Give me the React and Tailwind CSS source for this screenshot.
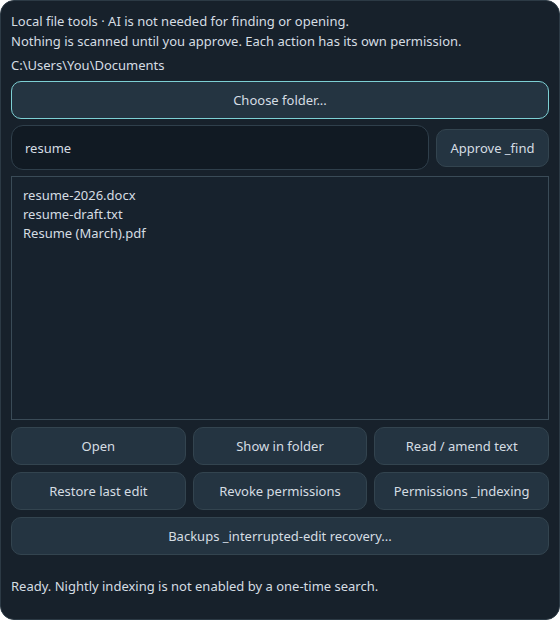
import { useState } from "react";

const files = ["resume-2026.docx", "resume-draft.txt", "Resume (March).pdf"];

const btnBase =
  "h-[38px] pt-[2px] rounded-[10px] border bg-[#243441] text-[13px] text-[#d5dde3] flex items-center justify-center";
const btn = btnBase + " border-[#33444f]";

export default function App() {
  const [query, setQuery] = useState("resume");

  return (
    <div
      className="w-[560px] h-[620px] bg-[#17212b] text-[#d5dde3] text-[13px] rounded-[14px] border border-[#2c3a45] px-[10px] pt-[10px] flex flex-col"
      style={{ fontFamily: '"Noto Sans", "Open Sans", sans-serif' }}
    >
      <div className="leading-[20px]">
        <div>Local file tools · AI is not needed for finding or opening.</div>
        <div>Nothing is scanned until you approve. Each action has its own permission.</div>
      </div>
      <div className="mt-[4px] leading-[20px]">C:\Users\You\Documents</div>

      <button className={btnBase + " mt-[6px] w-full border-[#7dd0d4]"}>Choose folder...</button>

      <div className="flex gap-[7px] mt-[6px] items-center">
        <input
          className="flex-1 h-[45px] rounded-[12px] border border-[#2f3f4b] bg-[#111a23] px-[13px] text-[13px] text-[#d5dde3] outline-none"
          value={query}
          onChange={(e) => setQuery(e.target.value)}
        />
        <button className={btn + " w-[113px]"}>Approve _find</button>
      </div>

      <div className="mt-[6px] h-[244px] border border-[#3a4b57] bg-[#17222d] px-[11px] py-[9px] leading-[19px]">
        {files.map((f) => (
          <div key={f}>{f}</div>
        ))}
      </div>

      <div className="grid grid-cols-3 gap-[7px] mt-[7px]">
        <button className={btn}>Open</button>
        <button className={btn}>Show in folder</button>
        <button className={btn}>Read / amend text</button>
        <button className={btn}>Restore last edit</button>
        <button className={btn}>Revoke permissions</button>
        <button className={btn}>Permissions _indexing</button>
      </div>
      <button className={btn + " mt-[7px] w-full"}>Backups _interrupted-edit recovery...</button>

      <div className="mt-[21px] leading-[20px]">Ready. Nightly indexing is not enabled by a one-time search.</div>
    </div>
  );
}
